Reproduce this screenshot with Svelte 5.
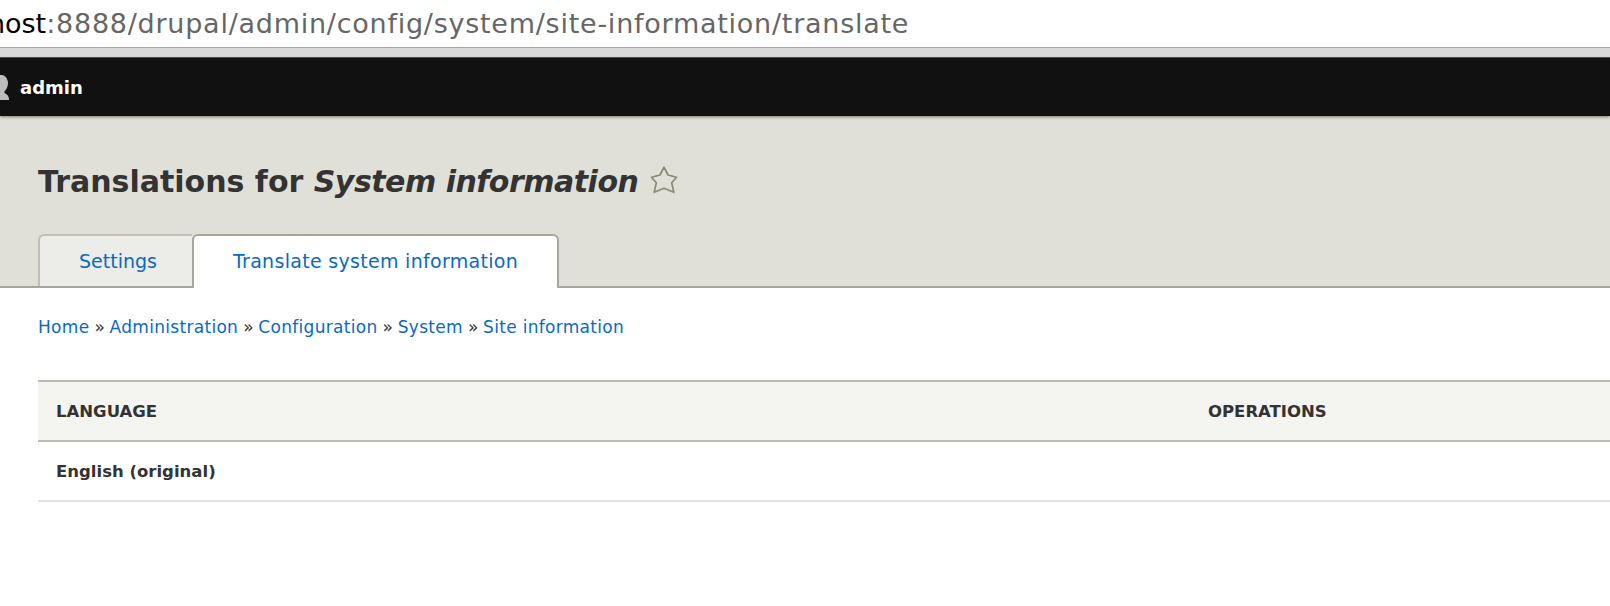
<script>
  const crumbs = ['Home', 'Administration', 'Configuration', 'System', 'Site information'];
</script>

<div class="urlbar">
  <span class="host">localhost</span><span class="path">:8888/drupal/admin/config/system/site-information/translate</span>
</div>
<div class="chrome"></div>

<div class="toolbar">
  <svg class="user" width="20" height="30" viewBox="0 0 20 30">
    <path d="M2 3 C5 3 8 7 8 11 C8 15 6 18 4.5 19.5 L4.5 21 C6 22 9 23 9 27.5 L9 28 L-3 28 L-3 3 Z" fill="#bdbdbd" />
  </svg>
  <span>admin</span>
</div>

<header class="head">
  <h1>
    <span>Translations for <em>System information</em></span>
    <svg class="star" width="28" height="28" viewBox="0 0 28 28">
      <path d="M14 1.2 L18 9 L26.5 11.3 L21.7 16.7 L23.8 26.3 L14 22.3 L4.2 26.3 L6.3 16.7 L1.5 11.3 L10 9 Z" fill="none" stroke="#8a8a78" stroke-width="1.7" stroke-linejoin="round" />
    </svg>
  </h1>
  <nav class="tabs">
    <a class="tab" href="#settings">Settings</a>
    <a class="tab active" href="#translate">Translate system information</a>
  </nav>
</header>

<main class="content">
  <div class="crumbs">
    {#each crumbs as crumb, i}
      {#if i > 0}<span class="sep">{' » '}</span>{/if}<a href="#crumb">{crumb}</a>
    {/each}
  </div>

  <div class="table">
    <div class="row thead">
      <div>LANGUAGE</div>
      <div>OPERATIONS</div>
    </div>
    <div class="row">
      <div>English (original)</div>
      <div></div>
    </div>
  </div>
</main>

<style>
  :global(body) {
    margin: 0;
    background: #fff;
    overflow: hidden;
  }

  .urlbar {
    height: 47px;
    margin-left: -75px;
    font-family: "DejaVu Sans", sans-serif;
    font-size: 27px;
    line-height: 47px;
    white-space: nowrap;
    color: #000;
  }

  .path {
    color: #666;
    letter-spacing: 0.75px;
  }

  .chrome {
    height: 9px;
    border-top: 1px solid #aaa;
    border-bottom: 1px solid #555;
    background: #d9d9d9;
  }

  .toolbar {
    display: flex;
    align-items: center;
    height: 58px;
    background: #111;
    color: #fff;
    font-family: "DejaVu Sans", sans-serif;
    font-weight: 700;
    font-size: 18px;
    box-shadow: 0 1px 3px rgba(0, 0, 0, 0.45);
    position: relative;
  }

  .user {
    flex-shrink: 0;
  }

  .head {
    background: #e0e0d8;
    height: 172px;
    box-sizing: border-box;
    padding: 45px 0 0 38px;
    border-bottom: 2px solid #a6a69e;
    display: flex;
    flex-direction: column;
    font-family: "DejaVu Sans", sans-serif;
  }

  h1 {
    margin: 0;
    display: flex;
    align-items: center;
    gap: 12px;
    height: 40px;
    font-size: 30px;
    font-weight: 700;
    color: #333;
    white-space: pre;
  }

  h1 em {
    font-style: oblique;
    letter-spacing: -0.5px;
  }

  .star {
    margin-top: -3px;
  }

  .tabs {
    display: flex;
    align-items: flex-start;
    margin-top: auto;
    margin-bottom: -2px;
  }

  .tab {
    box-sizing: border-box;
    height: 52px;
    line-height: 50px;
    padding: 0 35px 0 39px;
    border: 2px solid #bfbfb8;
    border-bottom: 0;
    border-right: 0;
    border-radius: 6px 0 0 0;
    background: #ecece8;
    color: #0a6ac0;
    text-decoration: none;
    font-size: 19px;
  }

  .tab.active {
    height: 54px;
    padding: 0 39px;
    background: #fff;
    border: 2px solid #a6a69e;
    border-bottom: 0;
    border-radius: 6px 6px 0 0;
    letter-spacing: 0.3px;
  }

  .content {
    padding: 0 0 0 38px;
    font-family: "DejaVu Sans", sans-serif;
    color: #333;
  }

  .crumbs {
    margin-top: 27px;
    height: 24px;
    line-height: 24px;
    font-size: 17px;
    white-space: pre;
  }

  .crumbs a {
    color: #0a6ac0;
    text-decoration: none;
    letter-spacing: 0.3px;
  }

  .sep {
    letter-spacing: -0.35px;
  }

  .table {
    margin-top: 41px;
    font-size: 16.5px;
    font-weight: 700;
  }

  .row {
    display: grid;
    grid-template-columns: 1152px 1fr;
    height: 58px;
    align-items: center;
    border-bottom: 2px solid #e4e4de;
  }

  .row > div {
    padding-left: 18px;
  }

  .thead {
    background: #f4f4f0;
    border-top: 2px solid #bcbcb4;
    border-bottom-color: #bcbcb4;
  }
</style>
